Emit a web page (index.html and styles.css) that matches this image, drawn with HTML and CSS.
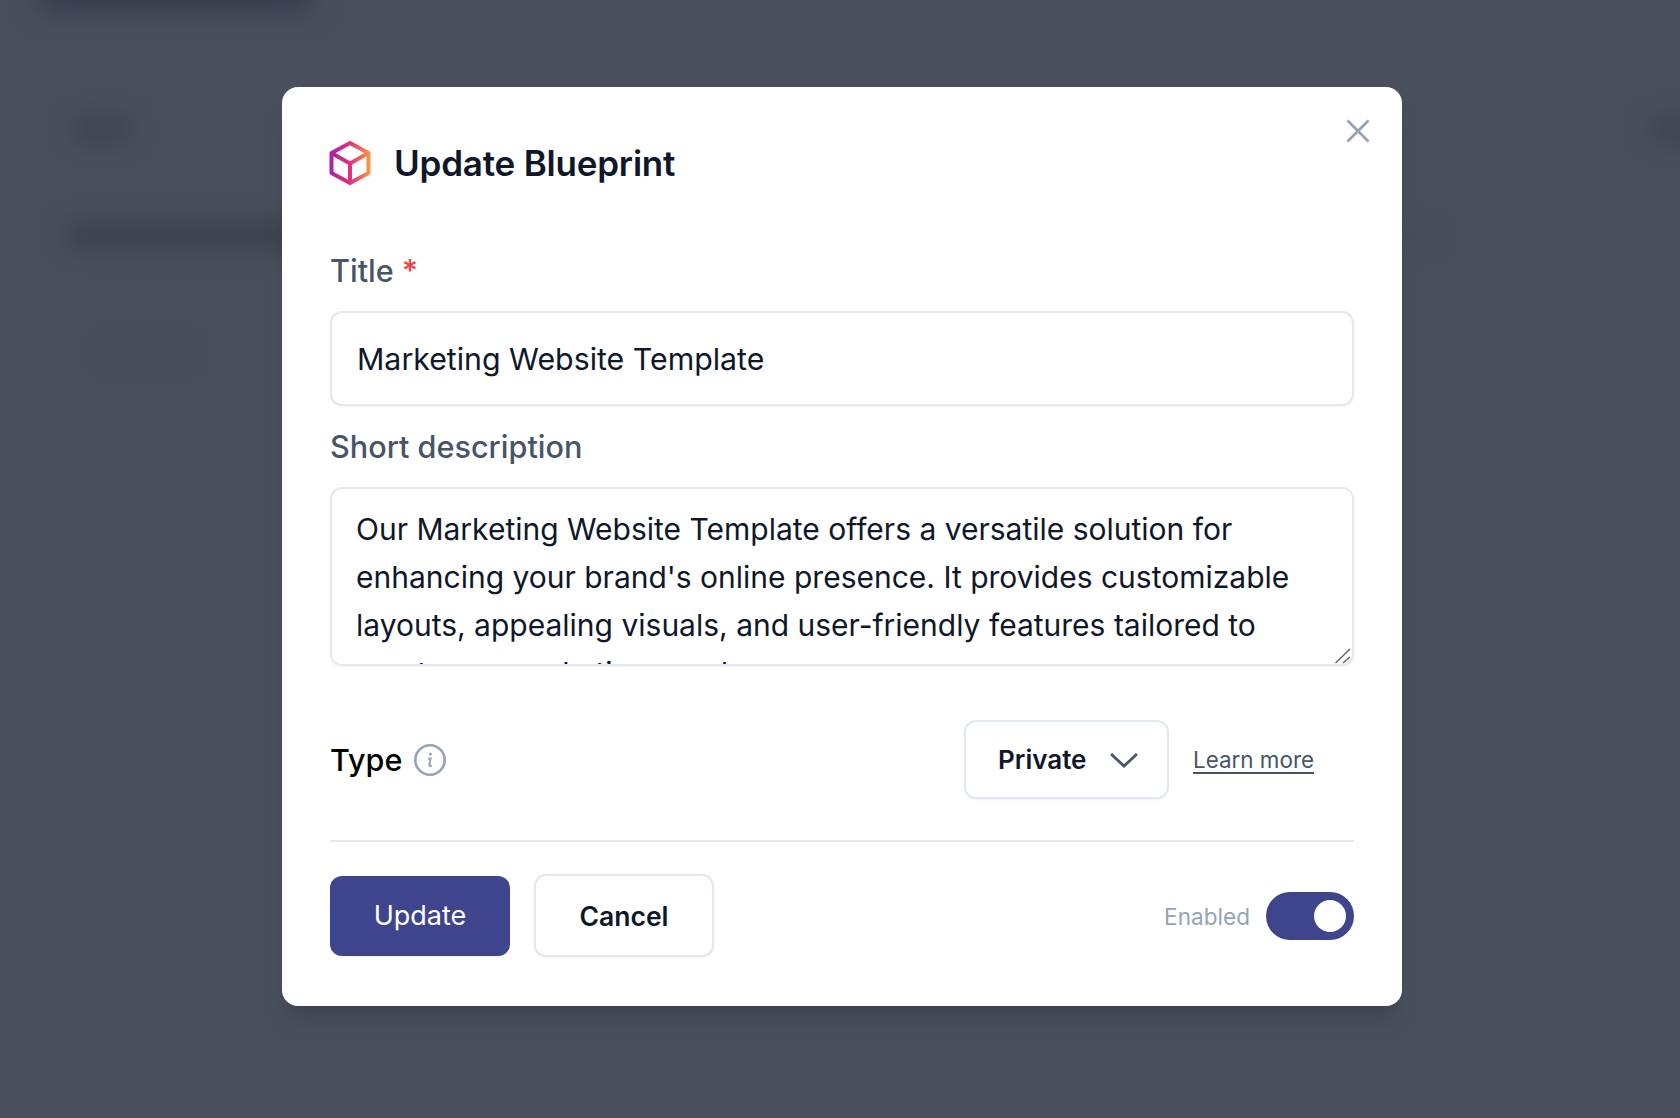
FILE: index.html
```html
<!DOCTYPE html>
<html lang="en">
<head>
    <meta charset="UTF-8">
    <meta name="viewport" content="width=device-width, initial-scale=1.0">
    <title>Update Blueprint</title>
    <link rel="stylesheet" href="styles.css">
</head>
<body>

    <!-- Blurred page behind the modal -->
    <div class="backdrop">
        <div class="ghost ghost-top"></div>
        <div class="ghost ghost-back"></div>
        <div class="ghost ghost-heading"></div>
        <div class="ghost ghost-cell"></div>
        <div class="ghost ghost-side"></div>
        <div class="ghost ghost-row"></div>
    </div>

    <div class="overlay">
        <div class="modal">
            <button class="close-btn" aria-label="Close">
                <svg width="24" height="24" viewBox="0 0 24 24" fill="none" stroke="#94a3b8" stroke-width="2.800">
                    <path d="M1.500 1.500 22.500 22.500M22.500 1.500 1.500 22.500"/>
                </svg>
            </button>

            <div class="modal-header">
                <svg class="logo" width="42" height="44" viewBox="0 0 42 44" fill="none" stroke="url(#cube)" stroke-width="4" stroke-linejoin="round">
                    <defs>
                        <linearGradient id="cube" gradientUnits="userSpaceOnUse" x1="1" y1="22" x2="41" y2="22">
                            <stop offset="0" stop-color="#a820ab"/>
                            <stop offset="0.5" stop-color="#e2307c"/>
                            <stop offset="1" stop-color="#f59b3e"/>
                        </linearGradient>
                    </defs>
                    <path d="M21 2 39.500 12V32L21 42 2.500 32V12Z"/>
                    <path d="M2.500 12 21 22.500 39.500 12M21 22.500V42"/>
                </svg>
                <h2>Update Blueprint</h2>
            </div>

            <form class="form">
                <label class="field-label" for="title">Title <span class="required">*</span></label>
                <input class="input" type="text" id="title" value="Marketing Website Template">

                <label class="field-label" for="description">Short description</label>
                <div class="textarea-wrap">
                    <textarea class="input textarea" id="description">Our Marketing Website Template offers a versatile solution for enhancing your brand's online presence. It provides customizable layouts, appealing visuals, and user-friendly features tailored to meet your marketing needs.</textarea>
                    <svg class="grip" width="16" height="16" viewBox="0 0 16 16" fill="none" stroke="#666" stroke-width="1.500">
                        <path d="M0.500 15 15 1M8 15 15 9"/>
                    </svg>
                </div>

                <div class="type-row">
                    <span class="type-label">Type</span>
                    <svg class="info-icon" width="32" height="32" viewBox="0 0 32 32" fill="none" stroke="#94a3b8">
                        <circle cx="16" cy="16" r="14.700" stroke-width="2.600"/>
                        <circle cx="16.400" cy="10" r="1.500" fill="#94a3b8" stroke="none"/>
                        <path d="M14.200 14.400H16.600L15.300 21C15.100 22.300 16.300 22.600 17.800 21.200" stroke-width="2"/>
                    </svg>
                    <button type="button" class="select-btn">
                        Private
                        <svg width="30" height="16" viewBox="0 0 30 16" fill="none" stroke="#475569" stroke-width="2.800">
                            <path d="M2 2 15 14 28 2"/>
                        </svg>
                    </button>
                    <a class="learn-link" href="#">Learn more</a>
                </div>

                <div class="modal-footer">
                    <button type="button" class="btn btn-primary">Update</button>
                    <button type="button" class="btn btn-secondary">Cancel</button>
                    <span class="toggle-label">Enabled</span>
                    <span class="toggle"><span class="toggle-knob"></span></span>
                </div>
            </form>
        </div>
    </div>

</body>
</html>
```

FILE: styles.css
```css
* {
    box-sizing: border-box;
}
html,
body {
    margin: 0;
    height: 100%;
}
body {
    font-family: Inter, "Open Sans", Arial, sans-serif;
    background-color: #4a4f5d;
    color: #0f172a;
    overflow: hidden;
    position: relative;
}

/* blurred stuff behind */
.backdrop {
    position: absolute;
    inset: 0;
    overflow: hidden;
}
.ghost {
    position: absolute;
    background-color: #2f3444;
    filter: blur(14px);
}
.ghost-top {
    left: 40px;
    top: -14px;
    width: 270px;
    height: 22px;
}
.ghost-back {
    left: 74px;
    top: 120px;
    width: 56px;
    height: 18px;
    opacity: 0.7;
}
.ghost-heading {
    left: 68px;
    top: 224px;
    width: 300px;
    height: 22px;
    opacity: 0.7;
}
.ghost-cell {
    left: 100px;
    top: 344px;
    width: 90px;
    height: 16px;
    opacity: 0.15;
}
.ghost-side {
    left: 1652px;
    top: 120px;
    width: 60px;
    height: 18px;
    opacity: 0.7;
}
.ghost-row {
    left: 1400px;
    top: 228px;
    width: 40px;
    height: 16px;
    opacity: 0.15;
}

.overlay {
    position: relative;
    display: flex;
    justify-content: center;
    padding-top: 87px;
    padding-left: 4px;
}
.modal {
    position: relative;
    width: 1120px;
    height: 919px;
    padding: 52px 48px 0;
    background-color: white;
    border-radius: 16px;
    box-shadow: 0 20px 25px -5px rgba(0, 0, 0, 0.1), 0 8px 10px -6px rgba(0, 0, 0, 0.1);
}
.close-btn {
    position: absolute;
    top: 32px;
    right: 32px;
    padding: 0;
    border: none;
    background: none;
    line-height: 0;
    cursor: pointer;
}

.modal-header {
    display: flex;
    align-items: center;
    height: 48px;
    gap: 23px;
}
.modal-header .logo {
    margin-left: -1px;
}
.modal-header h2 {
    margin: 0;
    font-size: 35px;
    font-weight: 600;
    letter-spacing: -0.2px;
    color: #0f172a;
}

.form {
    display: flex;
    flex-direction: column;
    margin-top: 60px;
}
.field-label {
    font-size: 30.600px;
    line-height: 48px;
    font-weight: 500;
    color: #475569;
    margin-bottom: 16px;
}
.required {
    color: #ef4444;
}
.input {
    display: block;
    width: 100%;
    height: 95px;
    padding: 0 25px;
    margin-bottom: 17px;
    border: 2px solid #e2e8f0;
    border-radius: 12px;
    box-shadow: 0 1px 2px rgba(0, 0, 0, 0.05);
    font-family: inherit;
    font-size: 30.300px;
    color: #0f172a;
    outline: none;
}
.textarea-wrap {
    position: relative;
}
.textarea {
    height: 179px;
    margin-bottom: 0;
    padding: 16px 24px 0;
    font-size: 30px;
    line-height: 48px;
    resize: none;
    scrollbar-width: none;
}
.grip {
    position: absolute;
    right: 3px;
    bottom: 2px;
}

.type-row {
    display: flex;
    align-items: center;
    height: 79px;
    margin-top: 54px;
}
.type-label {
    font-size: 30.500px;
    font-weight: 500;
    color: #000;
    margin-right: 12px;
}
.select-btn {
    display: flex;
    align-items: center;
    justify-content: space-between;
    width: 205px;
    height: 79px;
    margin-left: auto;
    padding: 0 28px 0 32px;
    background-color: white;
    border: 2px solid #e2e8f0;
    border-radius: 12px;
    box-shadow: 0 1px 2px rgba(0, 0, 0, 0.05);
    font-family: inherit;
    font-size: 26px;
    font-weight: 600;
    color: #0f172a;
}
.learn-link {
    margin-left: 24px;
    margin-right: 40px;
    font-size: 22.400px;
    color: #475569;
    text-decoration-thickness: 2px;
    text-underline-offset: 4px;
}

.modal-footer {
    display: flex;
    align-items: center;
    height: 117px;
    margin-top: 41px;
    padding-top: 32px;
    border-top: 2px solid #e5e7eb;
}
.btn {
    font-family: inherit;
    font-size: 27px;
    border-radius: 12px;
}
.btn-primary {
    width: 180px;
    height: 80px;
    background-color: #3f458c;
    border: none;
    color: white;
    box-shadow: 0 1px 2px rgba(0, 0, 0, 0.05);
}
.btn-secondary {
    width: 180px;
    height: 83px;
    margin-left: 24px;
    background-color: white;
    border: 2px solid #e2e8f0;
    box-shadow: 0 1px 2px rgba(0, 0, 0, 0.05);
    font-size: 26.500px;
    font-weight: 600;
    color: #0f172a;
}
.toggle-label {
    margin-left: auto;
    margin-right: 16px;
    padding-top: 2px;
    font-size: 22.600px;
    color: #94a3b8;
}
.toggle {
    display: flex;
    align-items: center;
    justify-content: flex-end;
    width: 88px;
    height: 48px;
    padding-right: 8px;
    background-color: #3f458c;
    border-radius: 24px;
}
.toggle-knob {
    width: 32px;
    height: 32px;
    background-color: white;
    border-radius: 50%;
}
```
